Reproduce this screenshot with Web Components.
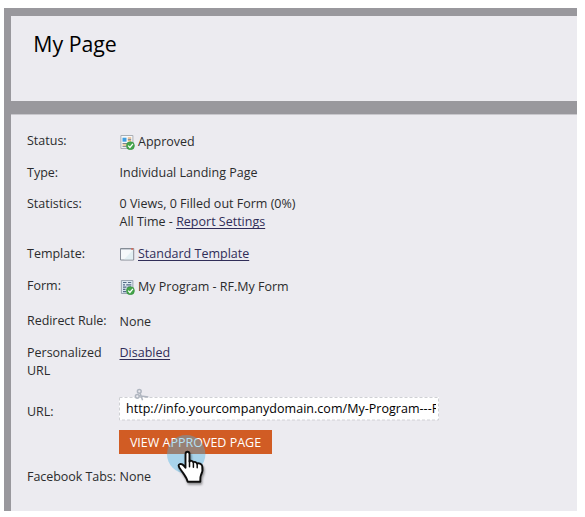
<!DOCTYPE html>
<html lang="en">
<head>
<meta charset="utf-8">
<title>My Page</title>
<style>
html,body{margin:0;background:#fff;overflow:hidden}
body{font:12.5px/18px "Open Sans","Noto Sans",sans-serif;color:#2b2b2d;width:585px;height:517px}
</style>
</head>
<body>
<page-summary></page-summary>
<script>
function define(name, html, setup) {
  customElements.define(name, class extends HTMLElement {
    connectedCallback() {
      if (this.shadowRoot) return;
      const t = document.createElement('template');
      t.innerHTML = html;
      this.attachShadow({mode:'open'}).append(t.content.cloneNode(true));
      if (setup) setup(this);
    }
  });
}

const badge = `<circle cx="10.4" cy="10.7" r="4" fill="#45a64a" stroke="#328a3c" stroke-width=".6"/><path d="M8.2 10.6l1.7 1.8 3-3.6" fill="none" stroke="#fff" stroke-width="1.3"/>`;
const icons = {
  page: `<path d="M.9.5h12v13H.9z" fill="#f8f9fa" stroke="#a2a7ae" stroke-width=".9"/><path d="M2.5 2.7h4v4h-4z" fill="#3f9ee0"/><path d="M7.8 3h3.4M7.8 5.8h3.4" stroke="#e59a4d" stroke-width="1.1"/><path d="M7.8 4.4h3.4M2.5 8.5h5M2.5 11.6h4" stroke="#7d8791"/><path d="M2.5 10h4" stroke="#d8a350"/>` + badge,
  template: `<path d="M.5 1.5h13.2v11.5H.5z" fill="#f5f9fa" stroke="#858c96"/><path d="M1 2.5h12.2" stroke="#c9ced6"/><path d="M13 3V12.5H4z" fill="#dcecf0" opacity=".7"/><path d="M11.2 2h2" stroke="#df604b" stroke-width="1.5"/>`,
  form: `<path d="M1.4.5h11.5v13H1.4z" fill="#dce7f0" stroke="#929dab" stroke-width=".9"/><path d="M3 2.5h3.5M8 2.5h3.2M3 4.8h2M6.3 4.8h5M3 7.1h3.5M7.6 7.1h3.5M3 9.4h2.5M3 11.6h3" stroke="#526b86" stroke-width="1.15"/>` + badge
};
define('status-icon', `<style>:host{display:block;width:14px;height:15px;flex:none}svg{display:block}</style><svg width="15" height="15" viewBox="0 0 15 15"></svg>`,
  el => { el.shadowRoot.querySelector('svg').innerHTML = icons[el.getAttribute('kind')]; });

define('text-link', `<style>:host{color:#302d58;text-decoration:underline;text-decoration-thickness:1px;text-underline-offset:2px;text-decoration-skip-ink:none}</style><slot></slot>`);

define('detail-row', `<style>
:host{display:grid;grid-template-columns:92.5px 1fr;align-items:start;box-sizing:border-box;white-space:nowrap}
.label{white-space:pre-line;padding-top:var(--label-drop,0px);letter-spacing:var(--label-tracking,0)}
.value{padding-top:var(--drop,0px)}
</style><div class="label"></div><div class="value"><slot></slot></div>`,
  el => {
    el.style.height = el.getAttribute('height') + 'px';
    el.shadowRoot.querySelector('.label').textContent = el.getAttribute('label').replace('|', '\n');
  });

define('icon-text', `<style>:host{display:flex;align-items:center;gap:4.5px;height:18px}</style><slot></slot>`);

define('url-field', `<style>
:host{display:block;position:relative;width:320px;height:23px;margin:-5px 0 0 -.5px}
.field{height:23px;box-sizing:border-box;background:#fff;padding:0 3px 0 7px;color:#000;line-height:24px}
.clip{overflow:hidden;white-space:nowrap;width:310px;height:23px;letter-spacing:.03px}
svg{position:absolute;left:0;top:0;overflow:visible}
</style><div class="field"><div class="clip"><slot></slot></div></div>
<svg width="320" height="24"><rect x=".5" y=".5" width="319" height="22.5" fill="none" stroke="#cfd0d4" stroke-dasharray="3 2"/>
<g fill="none" stroke="#b0b6c0" stroke-width="1.5"><circle cx="20.3" cy="-5.7" r="1.9"/><circle cx="18.3" cy="-.7" r="1.9"/><path d="M21-4l2.6 7.2M20-1.3l9.3 1.3"/></g></svg>`);

define('action-button', `<style>
:host{display:block;margin-left:-.5px}button{display:block;width:153px;height:24px;margin:0;padding:1px 0 0;border:0;background:#d15c24;color:#fff;font:inherit;font-size:12.5px;line-height:23px}
</style><button><slot></slot></button>`);

define('click-pointer', `<style>
:host{position:absolute;left:167px;top:435px;width:40px;height:54px}
svg{display:block;overflow:visible}
</style><svg width="40" height="54"><defs><filter id="s" x="-30%" y="-30%" width="170%" height="170%"><feDropShadow dx="1" dy="2" stdDeviation="1.3" flood-opacity=".4"/></filter></defs>
<circle cx="19.2" cy="19.2" r="19.2" fill="#49b3e5" opacity=".42"/>
<g filter="url(#s)" transform="translate(-.3 .7)"><path d="M18.8 18.5c0-1.6.8-2.5 2-2.5s2 .9 2 2.5v7.3c.5-1 3.5-1 3.8.8 1.3-.9 3.4-.2 3.6 1.3 1.8-.8 4.8.2 5.3 2.5.6 2.8.1 6.6-1.3 9.2-.8 1.6-.6 2.7-.6 6.4H20.9c-.5-3.5-3.1-6.4-5-9.4-1.3-2.1-3.8-4.5-4-6.7-.1-1.6 2.2-2.1 3.7-1.2 1.3.8 2.2 1.8 3.2 3.3z" fill="#fff" stroke="#111" stroke-width="1.9" stroke-linejoin="round"/><path d="M22.8 25v6M26.7 26.5v5M30.5 28v4" stroke="#111" stroke-width="1.5" stroke-linecap="round"/></g></svg>`);

define('page-summary', `<style>
:host{display:block;position:relative;width:585px;height:517px;box-sizing:border-box;padding:8px 8px 6px 4px}
.frame{height:503px;box-sizing:border-box;background:#99989d;padding:8px 0 0 7px;display:grid;grid-template-rows:85px 397px;gap:13px}
header,main{background:#ecebf0}
header{padding:12px 0 0 22.3px;box-sizing:border-box}
h1{font-size:21.3px;line-height:32px;font-weight:400;margin:0;color:#000}
main{border-top:1px solid #c8c7cc;box-sizing:border-box;padding:17px 0 0 16px}
</style>
<div class="frame"><header><h1>My Page</h1></header><main>
<detail-row label="Status:" height="32" style="--drop:1px"><icon-text><status-icon kind="page"></status-icon><span>Approved</span></icon-text></detail-row>
<detail-row label="Type:" height="31">Individual Landing Page</detail-row>
<detail-row label="Statistics:" height="50"><div>0 Views, 0 Filled out Form (0%)</div><div>All Time - <text-link>Report Settings</text-link></div></detail-row>
<detail-row label="Template:" height="32"><icon-text><status-icon kind="template"></status-icon><text-link>Standard Template</text-link></icon-text></detail-row>
<detail-row label="Form:" height="35" style="--drop:1px"><icon-text><status-icon kind="form"></status-icon><span>My Program - RF.My Form</span></icon-text></detail-row>
<detail-row label="Redirect Rule:" height="32" style="--drop:1px;--label-tracking:-.05px">None</detail-row>
<detail-row label="Personalized|URL" height="58"><text-link>Disabled</text-link></detail-row>
<detail-row label="URL:" height="28" style="--label-drop:1px"><url-field>http://info.yourcompanydomain.com/My-Program---RF</url-field></detail-row>
<detail-row label="" height="37"><action-button>VIEW APPROVED PAGE</action-button></detail-row>
<detail-row label="Facebook Tabs:" height="18" style="--drop:1px;--label-drop:1px;--label-tracking:-.05px">None</detail-row>
</main></div>
<click-pointer></click-pointer>`);
</script>
</body>
</html>
